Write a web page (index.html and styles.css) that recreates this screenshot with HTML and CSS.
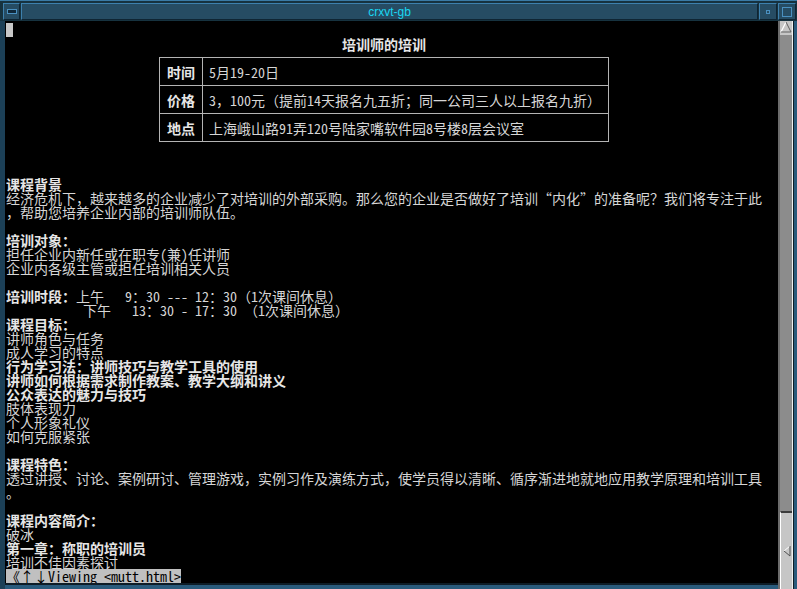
FILE: index.html
```html
<!DOCTYPE html>
<html lang="zh-CN">
<head>
    <meta charset="UTF-8">
    <title>crxvt-gb</title>
    <link rel="stylesheet" href="styles.css">
</head>
<body>
    <div class="window">
        <div class="titlebar">
            <div class="tb-btn tb-menu"><span class="menu-icon"></span></div>
            <div class="tb-title">crxvt-gb</div>
            <div class="tb-btn tb-min"><span class="min-icon"></span></div>
            <div class="tb-btn tb-max"><span class="max-icon"></span></div>
        </div>

        <div class="frame">
            <div class="term-wrap">
                <div class="term">
                    <div class="row"><span class="cursor"></span></div>

                    <!-- cabeçalho do documento -->
                    <div class="doc-head">
                        <div class="caption">培训师的培训</div>
                        <table class="info">
                            <tr><th>时间</th><td>5月19-20日</td></tr>
                            <tr><th>价格</th><td>3，100元（提前14天报名九五折；同一公司三人以上报名九折）</td></tr>
                            <tr><th>地点</th><td>上海峨山路91弄120号陆家嘴软件园8号楼8层会议室</td></tr>
                        </table>
                    </div>

<pre class="text"><b>课程背景</b>
经济危机下，越来越多的企业减少了对培训的外部采购。那么您的企业是否做好了培训“内化”的准备呢？我们将专注于此
，帮助您培养企业内部的培训师队伍。

<b>培训对象：</b>
担任企业内新任或在职专(兼)任讲师
企业内各级主管或担任培训相关人员

<b>培训时段：</b>上午   9：30 --- 12：30（1次课间休息）
           下午   13：30 - 17：30 （1次课间休息）
<b>课程目标：</b>
讲师角色与任务
成人学习的特点
<b>行为学习法：讲师技巧与教学工具的使用</b>
<b>讲师如何根据需求制作教案、教学大纲和讲义</b>
<b>公众表达的魅力与技巧</b>
肢体表现力
个人形象礼仪
如何克服紧张

<b>课程特色：</b>
透过讲授、讨论、案例研讨、管理游戏，实例习作及演练方式，使学员得以清晰、循序渐进地就地应用教学原理和培训工具
。

<b>课程内容简介：</b>
破冰
<b>第一章：称职的培训员</b>
培训不佳因素探讨</pre>

                    <div class="row"><span class="status">《↑↓Viewing &lt;mutt.html&gt;</span></div>
                </div>
                <div class="frame-bottom"></div>
            </div>

            <div class="scrollbar">
                <div class="sb-up">
                    <svg width="12" height="13" viewBox="0 0 12 13">
                        <polygon points="6,1 1,11 11,11" fill="#c6c6c6"/>
                        <polyline points="1,11 6,1" fill="none" stroke="#ffffff" stroke-width="1.2"/>
                        <polyline points="6,1 11,11 1,11" fill="none" stroke="#606060" stroke-width="1"/>
                    </svg>
                </div>
                <div class="sb-trough"></div>
                <div class="sb-thumb">
                    <svg width="8" height="12" viewBox="0 0 8 12">
                        <polygon points="1,6 7,1 7,11" fill="#c6c6c6"/>
                        <polyline points="7,1 1,6" fill="none" stroke="#ffffff" stroke-width="1"/>
                        <polyline points="1,6 7,11 7,1" fill="none" stroke="#505050" stroke-width="1"/>
                    </svg>
                </div>
            </div>
            <div class="frame-right"></div>
        </div>
    </div>
</body>
</html>
```

FILE: styles.css
```css
* {
    margin: 0;
    padding: 0;
    box-sizing: border-box;
}

body {
    background-color: #000000;
    width: 797px;
    height: 589px;
    overflow: hidden;
}

.window {
    width: 797px;
    height: 589px;
    display: flex;
    flex-direction: column;
    background-color: #1a3a4f;
}

/* Barra de título */
.titlebar {
    height: 21px;
    display: flex;
    gap: 1px;
    padding: 2px 1px 1px 3px;
    background-color: #16323f;
    border-top: 1px solid #3a7aa5;
}

.tb-btn,
.tb-title {
    background-color: #264c63;
    border: 1px solid;
    border-color: #3d80ad #0f2533 #0f2533 #3d80ad;
    display: flex;
    align-items: center;
    justify-content: center;
}

.tb-menu {
    width: 17px;
}

.tb-title {
    flex: 1;
    color: #1ad6f2;
    font-family: "Liberation Sans", Arial, sans-serif;
    font-size: 12px;
}

.tb-min,
.tb-max {
    width: 18px;
}

.menu-icon {
    width: 10px;
    height: 5px;
    border: 1px solid #4a90c0;
    background-color: #10283a;
}

.min-icon {
    width: 4px;
    height: 4px;
    border: 1px solid #4a90c0;
}

.max-icon {
    width: 10px;
    height: 10px;
    border: 1px solid #4a90c0;
}

/* Área do terminal */
.frame {
    flex: 1;
    display: flex;
}

.term-wrap {
    width: 778px;
    display: flex;
    flex-direction: column;
    border-left: 5px solid #1c4057;
}

.term {
    flex: 1;
    background-color: #000000;
    padding: 2px 0 0 1px;
    color: #d6d6d6;
    font-family: "Noto Sans Mono CJK SC", "Noto Sans CJK SC", "Liberation Mono", monospace;
    font-size: 14px;
    line-height: 14px;
    overflow: hidden;
}

.row {
    height: 14px;
}

.cursor {
    display: inline-block;
    width: 7px;
    height: 14px;
    background-color: #c8c8c8;
}

.doc-head {
    width: 450px;
    margin-left: 153px;
}

.caption {
    text-align: center;
    font-weight: bold;
    color: #e6e6e6;
}

.info {
    width: 450px;
    margin: 6px 0 35px;
    border-collapse: collapse;
}

.info th,
.info td {
    height: 28px;
    border: 1px solid #b4b4b4;
    font-weight: normal;
    text-align: left;
    padding: 0 0 0 6px;
    white-space: nowrap;
}

.info th {
    width: 43px;
    padding: 0;
    text-align: center;
    font-weight: bold;
    color: #e6e6e6;
}

.text {
    font: inherit;
    white-space: pre;
}

.text b {
    color: #e6e6e6;
}

.status {
    display: inline-block;
    background-color: #c0c0c0;
    color: #000000;
    height: 14px;
}

.frame-bottom {
    height: 6px;
    background-color: #2a5b7c;
    border-top: 2px solid #0e1d27;
}

/* Barra de rolagem */
.scrollbar {
    width: 15px;
    display: flex;
    flex-direction: column;
    background-color: #8c8c8c;
    border-left: 2px solid #6c6c6c;
    border-right: 1px solid #f0f0f0;
}

.sb-up {
    height: 14px;
    background-color: #c6c6c6;
    display: flex;
    justify-content: center;
}

.sb-trough {
    flex: 1;
}

.sb-thumb {
    height: 78px;
    background-color: #c6c6c6;
    border-top: 2px solid #3c3c3c;
    border-left: 1px solid #ffffff;
    display: flex;
    align-items: center;
    justify-content: center;
}

.frame-right {
    width: 4px;
    background-color: #2a5b7c;
    border-left: 1px solid #0e1d27;
}
```
